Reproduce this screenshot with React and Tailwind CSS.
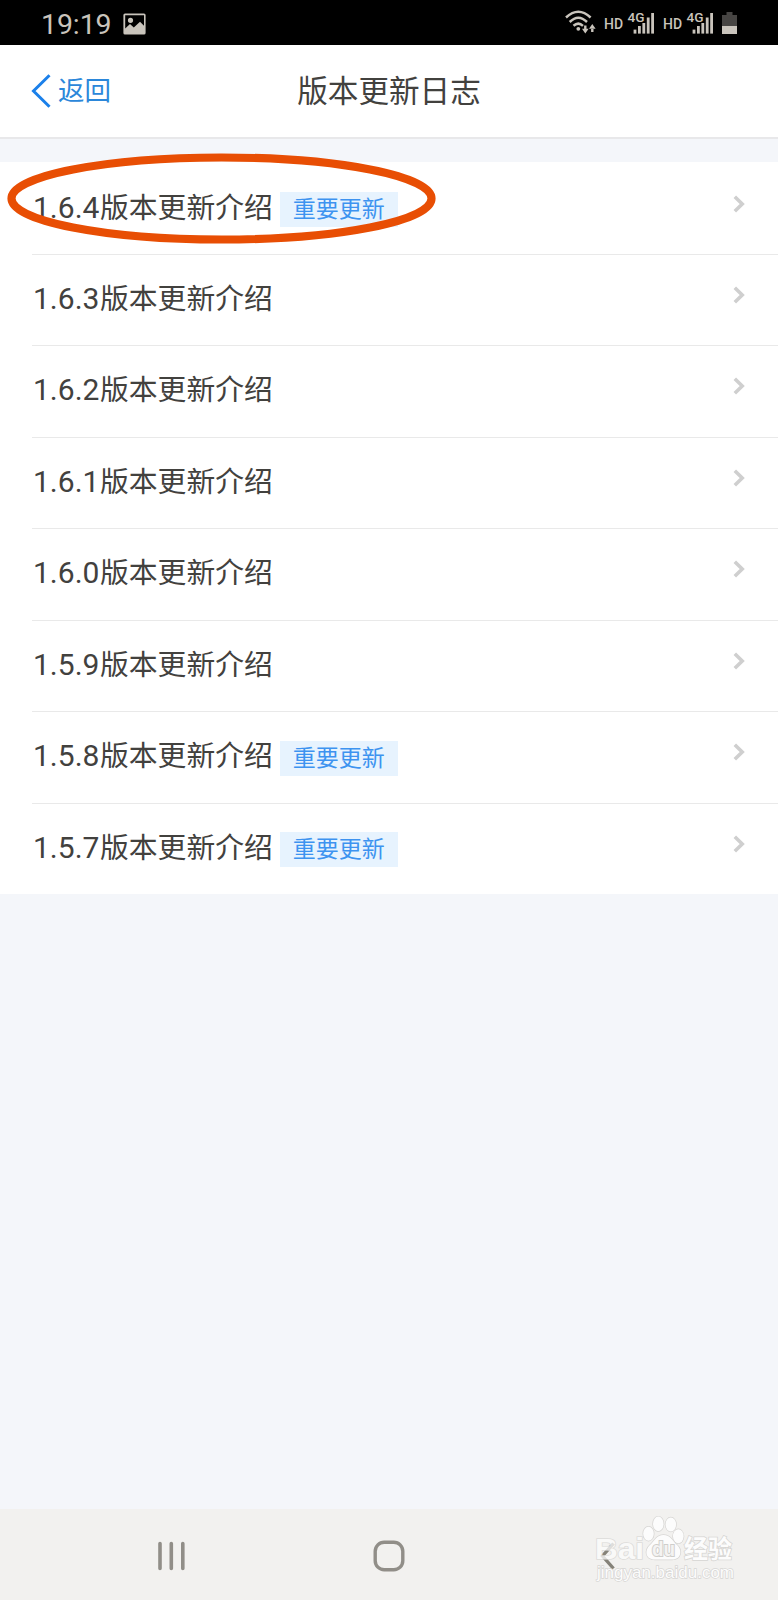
/**
 * Changelog — liste des versions (vue mobile)
 * Barre de statut + en-tête + une ligne par version + barre de navigation Android
 */

const VERSIONS = [
  { version: '1.6.4', important: true },
  { version: '1.6.3' },
  { version: '1.6.2' },
  { version: '1.6.1' },
  { version: '1.6.0' },
  { version: '1.5.9' },
  { version: '1.5.8', important: true },
  { version: '1.5.7', important: true },
];

function Signal() {
  return (
    <svg className="w-[27px] h-[24px] shrink-0 overflow-visible" viewBox="0 0 27 24" fill="#c9c4bc">
      <text x="-0.5" y="10.6" fontSize="13.5" fontWeight="500" fontFamily="Roboto, sans-serif" textLength="17" lengthAdjust="spacingAndGlyphs">4G</text>
      <rect x="5.6" y="18.6" width="2.8" height="4" />
      <rect x="10" y="15" width="2.8" height="7.6" />
      <rect x="14.4" y="12" width="2.8" height="10.6" />
      <rect x="18.8" y="6.5" width="2.8" height="16.1" />
      <rect x="23.2" y="2" width="2.8" height="20.6" />
    </svg>
  );
}

function StatusBar() {
  return (
    <div className="h-[45px] bg-black text-[#c9c4bc] flex items-center shrink-0">
      <span className="ml-[41px] w-[71px] text-[28.5px] leading-none tracking-[-0.1px] pt-[5px] whitespace-nowrap">19:19</span>
      <svg className="ml-[11px] mt-[2px] w-[23px] h-[22px]" viewBox="0 0 23 22">
        <path
          fillRule="evenodd"
          fill="#c9c4bc"
          d="M2 0.5h19a1.6 1.6 0 0 1 1.6 1.6v17.8a1.6 1.6 0 0 1-1.6 1.6H2A1.6 1.6 0 0 1 .4 19.9V2.1A1.6 1.6 0 0 1 2 .5zM2.2 2.2V15.6L7 11l3.8 3.6L17 8.8l4 4V2.2zM7.5 4.7a2.6 2.6 0 1 1 0 5.2a2.6 2.6 0 0 1 0-5.2z"
        />
      </svg>
      <div className="ml-auto mr-[41px] flex items-center">
        {/* Wifi + flèches de trafic */}
        <svg className="w-[31px] h-[25px] mr-[8px]" viewBox="0 0 31 25" fill="none" stroke="#c9c4bc" strokeWidth="2.5">
          <path d="M1 7.500Q13.300-4 25.600 7.500" />
          <path d="M4.700 12Q13.300 3.500 22 12" />
          <path d="M8.500 15.800Q13.300 11.500 18 15.800" />
          <circle cx="13.3" cy="18.8" r="1.9" fill="#c9c4bc" stroke="none" />
          <path d="M20.300 15.500v5M27.300 22v-3" strokeWidth="2.4" />
          <path d="M17 18.800h6.600l-3.300 4.700zM24 18.800h6.600l-3.300-4.700z" fill="#c9c4bc" stroke="none" />
        </svg>
        <span className="w-[24px] text-[14px] leading-none font-medium pt-[2px]">HD</span>
        <Signal />
        <span className="ml-[8px] w-[24px] text-[14px] leading-none font-medium pt-[2px]">HD</span>
        <Signal />
        <svg className="ml-[8px] w-[15px] h-[24px]" viewBox="0 0 15 24">
          <path d="M4.5 1h6v3H15v19H0V4h4.5z" fill="#474543" />
          <rect y="15" width="15" height="8" fill="#c9c4bc" />
        </svg>
      </div>
    </div>
  );
}

function Header() {
  return (
    <header className="h-[94px] bg-white border-b-2 border-[#e8e8ea] grid grid-cols-3 items-center shrink-0">
      <button className="flex items-center pl-[31px] text-[#2b87da]">
        <svg className="w-[20px] h-[34px]" viewBox="0 0 20 34" fill="none">
          <path d="M18.5 1.2L2.5 17l16 15.8" stroke="#1b80ea" strokeWidth="3" />
        </svg>
        <span className="ml-[7px] text-[26.5px] leading-none">返回</span>
      </button>
      <h1 className="pt-[2px] text-center text-[30.6px] leading-none text-[#42413e] whitespace-nowrap">版本更新日志</h1>
    </header>
  );
}

function VersionRow({ version, important = false, first = false }) {
  return (
    <li className="h-[91.5px] pl-[32px]">
      <div className={`h-full flex items-center pr-[33px] ${first ? '' : 'border-t border-[#e9e9e9] pb-[2px]'}`}>
        <span className="ml-[1px] w-[67px] text-[30px] leading-none text-[#42413e]">{version}</span>
        <span className="pt-[1px] text-[28.8px] leading-none text-[#42413e]">版本更新介绍</span>
        {important && (
          <span className="ml-[7px] mt-[4px] w-[118px] h-[35px] bg-[#e7f3fe] text-[#3d93f0] text-[23px] leading-none flex items-center justify-center">
            重要更新
          </span>
        )}
        <svg className="ml-auto mb-[8px] w-[12px] h-[18px]" viewBox="0 0 12 18" fill="none">
          <path d="M1.8 1.8L9.2 9l-7.400 7.200" stroke="#cfcfcf" strokeWidth="3.600" />
        </svg>
      </div>
    </li>
  );
}

// Filigrane Baidu Jingyan
function Watermark() {
  return (
    <svg
      className="absolute left-[590px] top-[4px] w-[150px] h-[75px]"
      viewBox="0 0 150 75"
      fill="#fcfcfc"
      stroke="#d6d5d3"
      strokeWidth="1.6"
      paintOrder="stroke"
      fontFamily="'Liberation Sans', 'Noto Sans CJK SC', sans-serif"
    >
      <text x="5" y="45.500" fontSize="30" fontWeight="700" textLength="49" lengthAdjust="spacingAndGlyphs" opacity="0.75">Bai</text>
      <g strokeWidth="1.4">
        <ellipse cx="58.500" cy="20.700" rx="5.300" ry="7" />
        <ellipse cx="68.300" cy="10.900" rx="5.300" ry="7.300" />
        <ellipse cx="80.800" cy="11.500" rx="5.300" ry="7" />
        <ellipse cx="88.300" cy="23.300" rx="5.300" ry="7" />
        <path d="M73.500 22c7 0 9 6 13.500 10c5.500 5 4.500 14.500-5 14.500H65c-10 0-10.500-9.500-5-14.500c4.500-4 6.500-10 13.500-10z" />
      </g>
      <text x="62" y="43" fontSize="20" fontWeight="700" fill="#f4f3f2" stroke="#cfcecb" strokeWidth="2" textLength="23" lengthAdjust="spacingAndGlyphs">du</text>
      <text x="94" y="44.500" fontSize="25" fontWeight="700" textLength="48" lengthAdjust="spacingAndGlyphs">经验</text>
      <text x="7" y="65" fontSize="17" strokeWidth="1.400" textLength="137" lengthAdjust="spacingAndGlyphs">jingyan.baidu.com</text>
    </svg>
  );
}

function NavBar() {
  return (
    <nav className="relative h-[91px] bg-[#f2f1ef] shrink-0">
      <div className="h-full grid grid-cols-3 items-center">
        <svg className="ml-[157px] mt-[2px] w-[28px] h-[30px]" viewBox="0 0 28 30" stroke="#918e88" strokeWidth="3.6" strokeLinecap="round">
          <path d="M3 2.500v25M14.300 2.500v25M25.800 2.500v25" />
        </svg>
        <svg className="mx-auto mt-[2px] w-[32px] h-[32px]" viewBox="0 0 32 32" fill="none">
          <rect x="2.200" y="2.200" width="27.600" height="27.600" rx="9" stroke="#918e88" strokeWidth="3.400" />
        </svg>
        <svg className="ml-[81px] mt-[2px] w-[16px] h-[28px]" viewBox="0 0 16 28" fill="none">
          <path d="M13.500 1.500L2.500 14l11 12.500" stroke="#858279" strokeWidth="3.400" />
        </svg>
      </div>
      <Watermark />
    </nav>
  );
}

export default function App() {
  return (
    <div className="relative w-[778px] h-[1600px] overflow-hidden flex flex-col bg-[#f4f6fa] font-[Roboto,'Noto_Sans_CJK_SC',sans-serif]">
      <StatusBar />
      <Header />
      <ul className="mt-[23px] bg-white">
        {VERSIONS.map((v, i) => (
          <VersionRow key={v.version} {...v} first={i === 0} />
        ))}
      </ul>
      <div className="flex-1" />
      <NavBar />

      {/* Entoure la dernière version */}
      <svg className="absolute left-0 top-[145px] w-[450px] h-[110px] pointer-events-none" viewBox="0 0 450 110" fill="none">
        <ellipse cx="221.500" cy="53.500" rx="210" ry="41" stroke="#e84e04" strokeWidth="8.200" />
      </svg>
    </div>
  );
}
